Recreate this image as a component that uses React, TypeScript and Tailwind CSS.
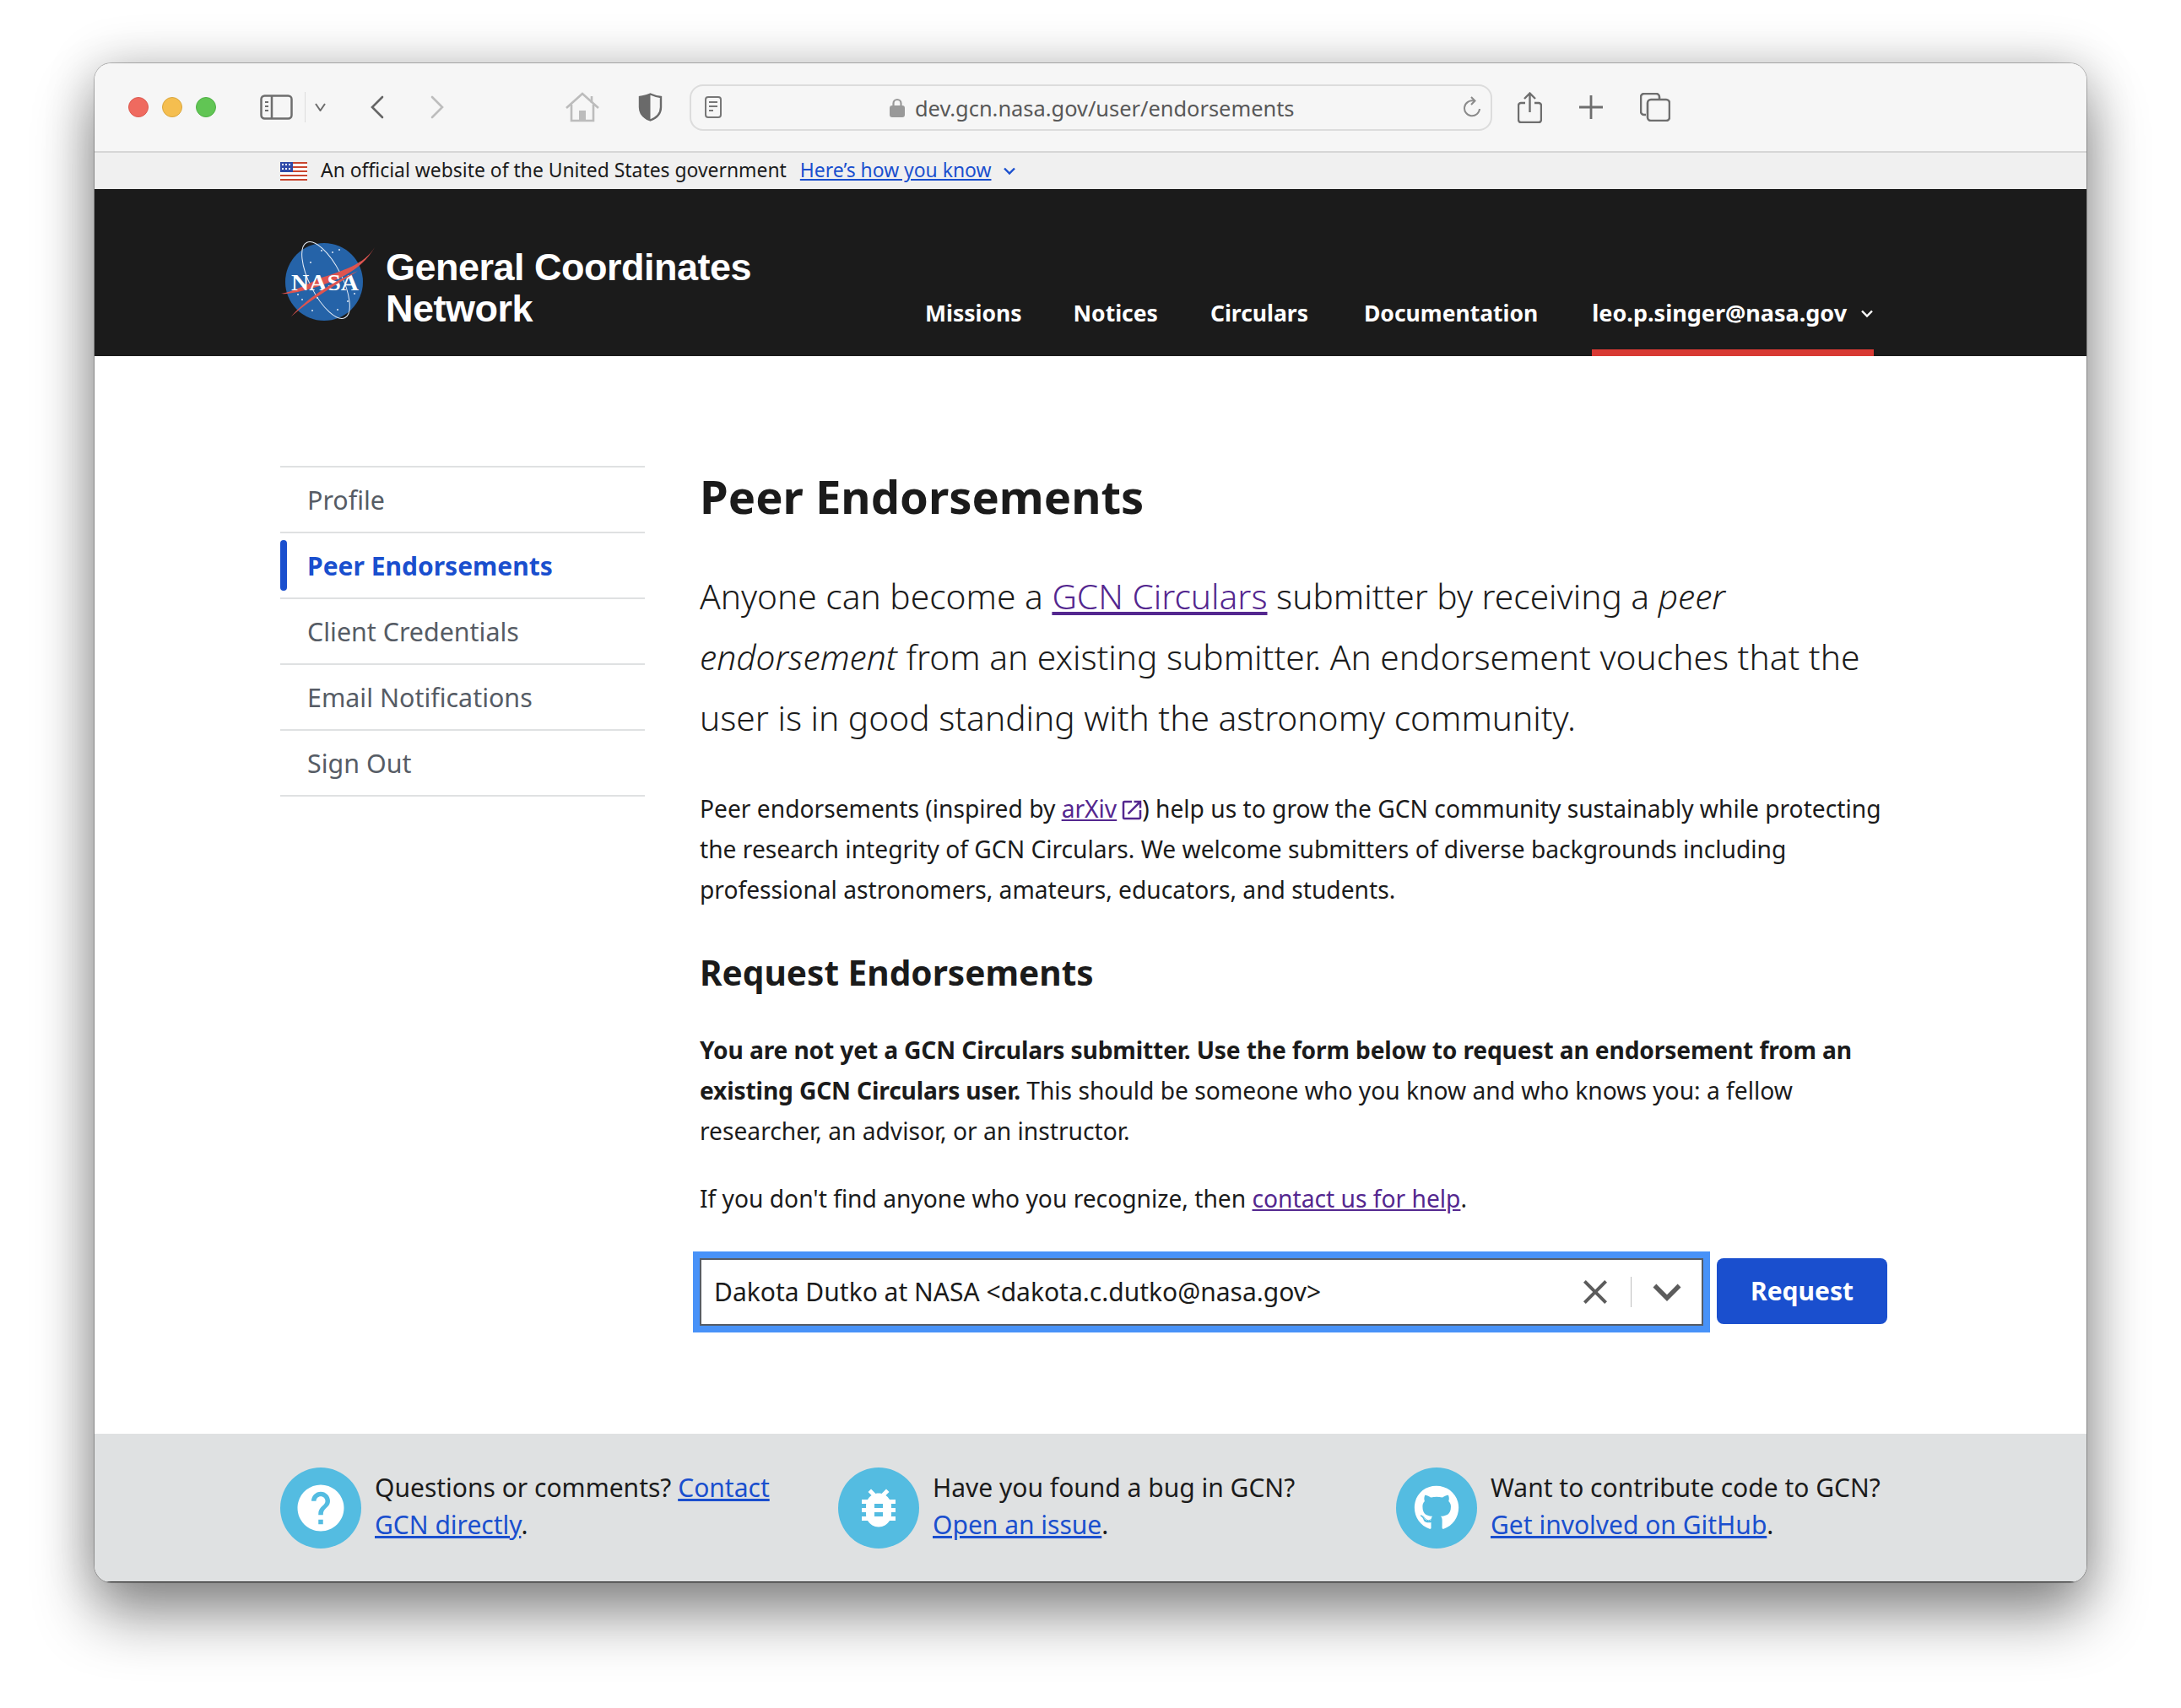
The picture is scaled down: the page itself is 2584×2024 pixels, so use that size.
import React from 'react';
import { MdHelp, MdBugReport, MdOpenInNew, MdClose, MdExpandMore } from 'react-icons/md';
import { FaGithub } from 'react-icons/fa';

const SIDE_ITEMS = ['Profile', 'Peer Endorsements', 'Client Credentials', 'Email Notifications', 'Sign Out'];
const NAV_ITEMS = [
  { label: 'Missions', cls: 'ml-0' },
  { label: 'Notices', cls: 'ml-[61px]' },
  { label: 'Circulars', cls: 'ml-[62px]' },
  { label: 'Documentation', cls: 'ml-[66px]' },
];

function NasaLogo() {
  return (
    <svg width="115" height="100" viewBox="0 0 115 100" className="shrink-0">
      <g transform="translate(-4 -1)">
        <circle cx="56" cy="51" r="46" fill="#2563a8" />
        <g fill="#dbe6f5">
          <circle cx="53" cy="14" r="1" /><circle cx="66" cy="16" r="1" /><circle cx="74" cy="13" r="1" />
          <circle cx="40" cy="28" r="1" /><circle cx="30" cy="72" r="1" /><circle cx="42" cy="85" r="1" />
          <circle cx="84" cy="74" r="1" /><circle cx="92" cy="65" r="1" /><circle cx="72" cy="84" r="1" />
          <circle cx="25" cy="66" r="1" /><circle cx="48" cy="70" r="1" />
        </g>
        <ellipse cx="58" cy="49" rx="19" ry="50" fill="none" stroke="#e6eef8" strokeWidth="1" transform="rotate(-27 58 49)" />
        <path d="M116 10 C100 38 70 50 44 58 C30 62 14 66 5 65 C18 63 34 55 50 47 C78 38 104 30 116 10Z" fill="#dd5450" />
        <text x="17" y="61" fontFamily="'Liberation Serif', serif" fontWeight="700" fontSize="27" fill="#fff" textLength="80" lengthAdjust="spacingAndGlyphs">NASA</text>
        <path d="M17 92 C40 66 70 50 96 38 C72 54 42 70 17 92Z" fill="#dd5450" />
      </g>
    </svg>
  );
}

function Flag() {
  return (
    <svg width="32" height="22" viewBox="0 0 32 22" className="shrink-0">
      <rect width="32" height="22" fill="#fff" />
      <g fill="#c9462f">
        <rect y="0" width="32" height="2" /><rect y="5" width="32" height="2" /><rect y="10" width="32" height="2" />
        <rect y="15" width="32" height="2" /><rect y="20" width="32" height="2" />
      </g>
      <rect width="15" height="12" fill="#2f4aa8" />
      <g fill="#fff">
        <rect x="2" y="2" width="2" height="2" /><rect x="6" y="2" width="2" height="2" /><rect x="10" y="2" width="2" height="2" />
        <rect x="2" y="7" width="2" height="2" /><rect x="6" y="7" width="2" height="2" /><rect x="10" y="7" width="2" height="2" />
      </g>
    </svg>
  );
}

function Toolbar() {
  return (
    <div className="flex h-[106px] shrink-0 items-center border-b-2 border-[#d6d6d6] bg-[#f6f6f6] pl-[40px]">
      <div className="flex gap-4">
        <span className="h-6 w-6 rounded-full border border-[#dc5a50] bg-[#ef6a5f]" />
        <span className="h-6 w-6 rounded-full border border-[#d9a63e] bg-[#f5be4f]" />
        <span className="h-6 w-6 rounded-full border border-[#4fb045] bg-[#61c554]" />
      </div>
      <svg width="39" height="30" viewBox="0 0 39 30" fill="none" stroke="#6e6e6e" strokeWidth="2.5" className="ml-[52px]">
        <rect x="1.5" y="1.5" width="36" height="27" rx="4" />
        <path d="M14 2v26" />
        <path d="M6 9h4M6 14h4M6 19h4" strokeWidth="2" />
      </svg>
      <span className="ml-[14px] h-9 w-px bg-[#dcdcdc]" />
      <svg width="15" height="10" viewBox="0 0 15 10" fill="none" stroke="#6e6e6e" strokeWidth="2" className="ml-[10px]">
        <path d="M2 1l5.5 8L13 1" />
      </svg>
      <svg width="17" height="28" viewBox="0 0 17 28" fill="none" stroke="#666" strokeWidth="2.6" strokeLinecap="round" className="ml-[51px]">
        <path d="M15 2L3 14l12 12" />
      </svg>
      <svg width="17" height="28" viewBox="0 0 17 28" fill="none" stroke="#bdbdbd" strokeWidth="2.6" strokeLinecap="round" className="ml-[55px]">
        <path d="M2 2l12 12L2 26" />
      </svg>
      <svg width="40" height="36" viewBox="0 0 40 36" fill="none" stroke="#bcbcbc" strokeWidth="2.6" className="ml-[143px]">
        <path d="M1 19L20 2l19 17" />
        <path d="M7 15v19h26V15" />
        <path d="M31 5v8" />
        <rect x="16" y="22" width="8" height="12" fill="#bcbcbc" stroke="none" />
      </svg>
      <svg width="29" height="34" viewBox="0 0 29 34" className="ml-[46px]">
        <path d="M14.5 1.5C10 3.5 6 4.5 2 5v12c0 8 6 13 12.5 15.5C21 30 27 25 27 17V5c-4-.5-8-1.5-12.5-3.5Z" fill="none" stroke="#6a6a6a" strokeWidth="2.4" />
        <path d="M14.5 1.5C10 3.5 6 4.5 2 5v12c0 8 6 13 12.5 15.5Z" fill="#6a6a6a" />
      </svg>
      <div className="ml-[32px] flex h-[55px] w-[951px] items-center rounded-[16px] border-2 border-[#dcdcdc] pl-[16px]">
        <svg width="20" height="26" viewBox="0 0 20 26" fill="none" stroke="#777" strokeWidth="2">
          <rect x="1" y="1" width="18" height="24" rx="3" />
          <path d="M5 7h10M5 12h10M5 17h5" />
        </svg>
        <svg width="18" height="23" viewBox="0 0 18 23" className="ml-[199px]">
          <path d="M4.5 10V6.500a4.500 4.500 0 0 1 9 0V10" fill="none" stroke="#999" strokeWidth="2.200" />
          <rect x="0" y="9" width="18" height="14" rx="3" fill="#999" />
        </svg>
        <span className="ml-[12px] pt-[3px] text-[25.4px] leading-none text-[#585858]">dev.gcn.nasa.gov/user/endorsements</span>
        <svg width="20" height="27" viewBox="0 0 20 27" fill="none" stroke="#8a8a8a" strokeWidth="2" className="ml-auto mr-[12px]">
          <path d="M12 5.500A9 9 0 1 0 19 15" />
          <path d="M9 1l4.500 4.500L9 10" />
        </svg>
      </div>
      <svg width="29" height="37" viewBox="0 0 29 37" fill="none" stroke="#6e6e6e" strokeWidth="2.4" className="ml-[30px]">
        <path d="M9 13H4a3 3 0 0 0-3 3v17a3 3 0 0 0 3 3h21a3 3 0 0 0 3-3V16a3 3 0 0 0-3-3h-5" />
        <path d="M14.500 24V2M8 8l6.500-6.500L21 8" />
      </svg>
      <svg width="28" height="28" viewBox="0 0 28 28" fill="none" stroke="#6e6e6e" strokeWidth="2.8" className="ml-[44px]">
        <path d="M14 0v28M0 14h28" />
      </svg>
      <svg width="36" height="34" viewBox="0 0 36 34" fill="none" stroke="#6e6e6e" strokeWidth="2.6" className="ml-[44px]">
        <path d="M7 26H5a4 4 0 0 1-4-4V5a4 4 0 0 1 4-4h14a4 4 0 0 1 4 4v2" />
        <rect x="9" y="8" width="26" height="25" rx="4" />
      </svg>
    </div>
  );
}

function FooterItem({ icon, children }: { icon: React.ReactNode; children: React.ReactNode }) {
  return (
    <div className="flex w-[661px] items-center">
      <div className="flex h-[96px] w-[96px] shrink-0 items-center justify-center rounded-full bg-[#54bce1] text-white">
        {icon}
      </div>
      <p className="ml-[16px] w-[500px] pb-[4px] text-[30px] leading-[44px] text-[#1b1b1b]">{children}</p>
    </div>
  );
}

export default function App() {
  return (
    <div className="h-[2024px] w-[2584px] overflow-hidden bg-white pl-[112px] pt-[75px] font-['Noto_Sans',sans-serif]">
      <div className="flex h-[1800px] w-[2360px] flex-col overflow-hidden rounded-[20px] bg-white shadow-[0_0_0_1px_rgba(0,0,0,0.25),0_40px_70px_rgba(0,0,0,0.42),0_0_60px_rgba(0,0,0,0.2)]">
        <Toolbar />

        <div className="flex h-[43px] shrink-0 items-center bg-[#f0f0f0] pl-[220px]">
          <Flag />
          <span className="ml-4 text-[22.9px] text-[#1b1b1b]">An official website of the United States government</span>
          <a className="ml-4 text-[22.9px] text-[#1a4fce] underline">Here’s how you know</a>
          <svg width="16" height="10" viewBox="0 0 16 10" fill="none" stroke="#1a4fce" strokeWidth="2.4" className="ml-[14px]">
            <path d="M2 1.500l6 6 6-6" />
          </svg>
        </div>

        <header className="flex h-[198px] shrink-0 bg-[#1b1b1b] pl-[220px]">
          <div className="mt-[60px] flex h-[100px] items-start">
            <NasaLogo />
            <div className="ml-[10px] mt-[8px] w-[450px] font-['Liberation_Sans',sans-serif] text-[45px] font-bold leading-[49px] tracking-[-0.5px] text-white">
              General Coordinates<br />Network
            </div>
          </div>
          <nav className="ml-[189px] flex h-full items-end">
            {NAV_ITEMS.map((n) => (
              <a key={n.label} className={`h-[78px] text-[26.5px] font-bold leading-[54px] text-white ${n.cls}`}>
                {n.label}
              </a>
            ))}
            <a className="ml-[64px] flex h-[78px] items-start border-b-8 border-[#d83933] text-[27px] font-bold leading-[54px] text-white">
              leo.p.singer@nasa.gov
              <svg width="16" height="10" viewBox="0 0 16 10" fill="none" stroke="#fff" strokeWidth="2.400" className="ml-4 mt-[23px]">
                <path d="M2 1.500l6 6 6-6" />
              </svg>
            </a>
          </nav>
        </header>

        <div className="flex flex-1 pl-[220px]">
          <aside className="mt-[130px] w-[432px] shrink-0">
            <ul className="border-t-2 border-[#dfe1e2]">
              {SIDE_ITEMS.map((item) =>
                item === 'Peer Endorsements' ? (
                  <li key={item} className="flex h-[78px] items-center border-b-2 border-[#dfe1e2]">
                    <span className="h-[60px] w-2 rounded-full bg-[#1a4fce]" />
                    <span className="ml-[24px] text-[30px] font-bold text-[#1a4fce]">{item}</span>
                  </li>
                ) : (
                  <li key={item} className="flex h-[78px] items-center border-b-2 border-[#dfe1e2] pl-[32px] pt-[1px] text-[30.4px] text-[#565c65]">
                    {item}
                  </li>
                ),
              )}
            </ul>
          </aside>

          <main className="ml-[65px] w-[1407px] pt-[130px] text-[28.2px] leading-[48px] text-[#1b1b1b]">
            <h1 className="text-[54.3px] font-bold leading-[72px]">Peer Endorsements</h1>
            <p className="mt-[46px] whitespace-nowrap text-[40.7px] font-light leading-[72px]">
              Anyone can become a <a className="text-[#54278f] underline">GCN Circulars</a> submitter by receiving a <em>peer</em>
              <br />
              <em>endorsement</em> from an existing submitter. An endorsement vouches that the
              <br />
              user is in good standing with the astronomy community.
            </p>
            <p className="mt-[48px] whitespace-nowrap">
              Peer endorsements (inspired by <a className="text-[#54278f] underline">arXiv</a>
              <MdOpenInNew className="ml-[3px] mr-[-3px] inline-block align-[-6px] text-[#54278f]" size={30} />) help us to grow the GCN community sustainably while protecting
              <br />
              the research integrity of GCN Circulars. We welcome submitters of diverse backgrounds including
              <br />
              professional astronomers, amateurs, educators, and students.
            </p>
            <h2 className="mt-[45px] text-[40.6px] font-bold leading-[60px]">Request Endorsements</h2>
            <p className="mt-[37px] whitespace-nowrap">
              <strong className="tracking-[-0.15px]">You are not yet a GCN Circulars submitter. Use the form below to request an endorsement from an</strong>
              <br />
              <strong className="tracking-[-0.15px]">existing GCN Circulars user.</strong> This should be someone who you know and who knows you: a fellow
              <br />
              researcher, an advisor, or an instructor.
            </p>
            <p className="mt-[32px]">
              If you don't find anyone who you recognize, then <a className="text-[#54278f] underline">contact us for help</a>.
            </p>
            <div className="mt-[47px] flex items-start">
              <div className="flex h-[80px] w-[1189px] items-center border-2 border-[#565c65] pl-[15px] text-[30px] outline-[8px] outline-[#4892f8]">
                <span>Dakota Dutko at NASA &lt;dakota.c.dutko@nasa.gov&gt;</span>
                <MdClose className="ml-auto text-[#5c5c5c]" size={48} />
                <span className="ml-[18px] h-[36px] w-px bg-[#bdbdbd]" />
                <MdExpandMore className="ml-[9px] mr-[8px] text-[#5c5c5c]" size={66} />
              </div>
              <button className="ml-[16px] h-[78px] w-[202px] rounded-lg bg-[#1a4fce] text-[30px] font-bold text-white">Request</button>
            </div>
          </main>
        </div>

        <footer className="flex h-[176px] shrink-0 items-center bg-[#dfe1e2] pl-[220px] shadow-[inset_0_-1px_0_#333]">
          <FooterItem icon={<MdHelp size={66} />}>
            Questions or comments? <a className="text-[#1a4fce] underline">Contact</a>
            <br />
            <a className="text-[#1a4fce] underline">GCN directly</a>.
          </FooterItem>
          <FooterItem icon={<MdBugReport size={60} />}>
            Have you found a bug in GCN?
            <br />
            <a className="text-[#1a4fce] underline">Open an issue</a>.
          </FooterItem>
          <FooterItem icon={<FaGithub size={54} />}>
            Want to contribute code to GCN?
            <br />
            <a className="text-[#1a4fce] underline">Get involved on GitHub</a>.
          </FooterItem>
        </footer>
      </div>
    </div>
  );
}
